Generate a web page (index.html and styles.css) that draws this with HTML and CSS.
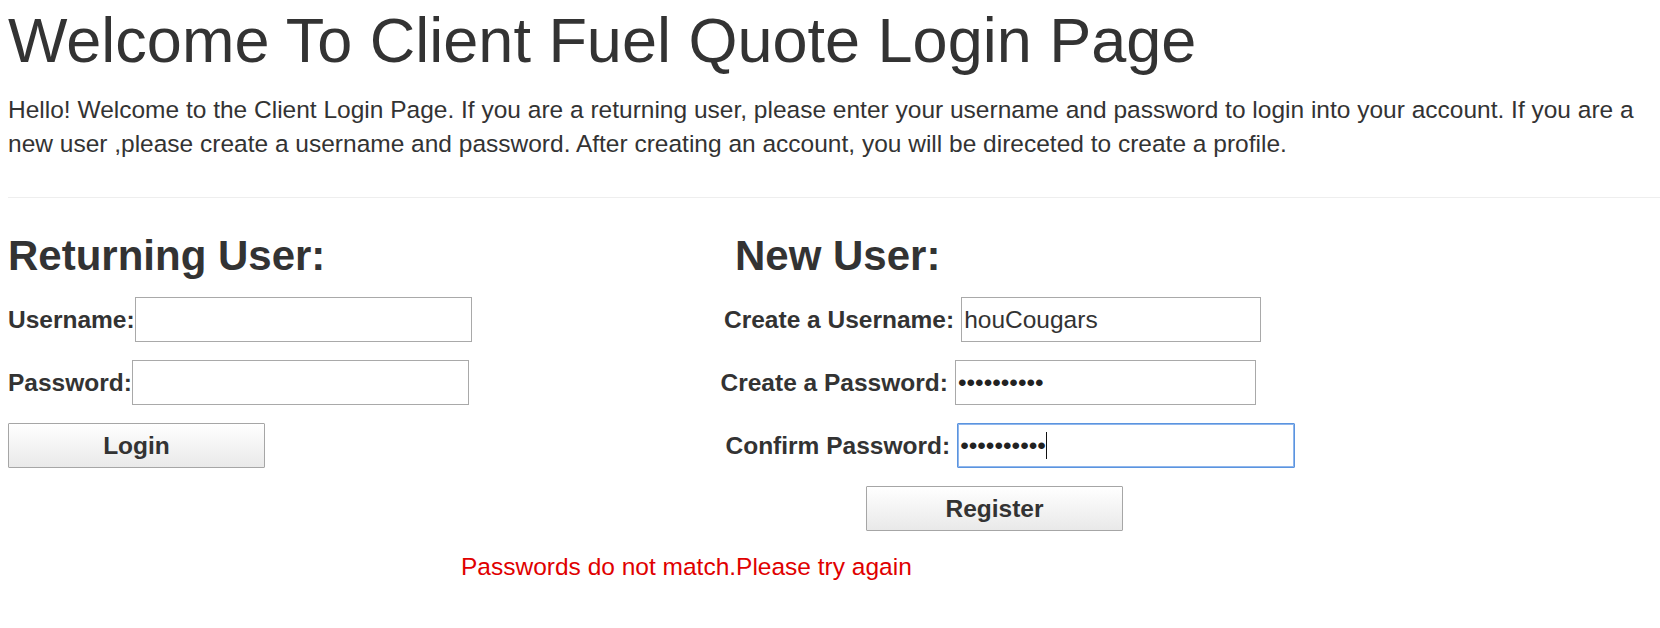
FILE: index.html
```html
<!DOCTYPE html>
<html lang="en">
<head>
<meta charset="utf-8">
<title>Client Fuel Quote Login</title>
<link rel="stylesheet" href="styles.css">
</head>
<body>
<div class="page">
  <h1 class="title">Welcome To Client Fuel Quote Login Page</h1>
  <p class="intro">Hello! Welcome to the Client Login Page. If you are a returning user, please enter your username and password to login into your account. If you are a new user ,please create a username and password. After creating an account, you will be direceted to create a profile.</p>
  <hr class="rule">
  <div class="forms">
    <section class="col col-returning">
      <h3 class="heading">Returning User:</h3>
      <div class="row"><label class="lbl">Username:</label><input class="field w-337" type="text"></div>
      <div class="row"><label class="lbl">Password:</label><input class="field w-337" type="password"></div>
      <button class="btn" type="button">Login</button>
    </section>
    <section class="col col-new">
      <h3 class="heading heading-new">New User:</h3>
      <div class="row row-gap r1"><label class="lbl">Create a Username:</label><input class="field w-300" type="text" value="houCougars"></div>
      <div class="row row-gap r2"><label class="lbl">Create a Password:</label><input class="field w-301" type="password" value="0123456789"></div>
      <div class="row row-gap r3"><label class="lbl">Confirm Password:</label><span class="field-wrap"><input class="field w-338 focused" type="password" value="0123456789"><span class="caret"></span></span></div>
      <button class="btn btn-register" type="button">Register</button>
    </section>
  </div>
  <p class="error">Passwords do not match.Please try again</p>
</div>
</body>
</html>
```
FILE: styles.css
```css
html, body {
  margin: 0;
  padding: 0;
  background: #fff;
}
body {
  font-family: "Liberation Sans", Arial, Helvetica, sans-serif;
  color: #333;
  font-size: 24.5px;
}
.page {
  padding-left: 8px;
  width: 1652px;
}
.title {
  margin: 6px 0 0;
  font-size: 63px;
  line-height: 69px;
  font-weight: 400;
  color: #333;
}
.intro {
  margin: 17.5px 0 0;
  font-size: 24.5px;
  line-height: 34.3px;
}
.rule {
  margin: 36px 0 34.5px;
  border: 0;
  border-top: 1px solid #eee;
  height: 0;
}
.forms {
  display: grid;
  grid-template-columns: 712px 1fr;
  align-items: start;
}
.col {
  display: flex;
  flex-direction: column;
  align-items: flex-start;
  gap: 18px;
}
.heading {
  margin: 0;
  font-size: 42px;
  line-height: 46.5px;
  font-weight: 700;
  color: #333;
}
.heading-new {
  margin-left: 15px;
}
.row {
  display: flex;
  align-items: center;
  height: 45px;
}
.row-gap {
  gap: 7px;
}
.r1 { margin-left: 4px; }
.r2 { margin-left: 0.5px; }
.r3 { margin-left: 5.5px; }
.lbl {
  font-weight: 700;
  font-size: 24.5px;
  white-space: nowrap;
}
.field {
  box-sizing: border-box;
  height: 45px;
  border: 1px solid #a9a9a9;
  padding: 0 2px;
  margin: 0;
  font-family: "Liberation Sans", Arial, sans-serif;
  font-size: 24.5px;
  color: #333;
  background: #fff;
  outline: none;
}
.field[type="password"] {
  color: #222;
}
.w-337 { width: 337px; }
.w-300 { width: 300px; }
.w-301 { width: 301px; }
.w-338 { width: 338px; }
.field-wrap {
  position: relative;
  display: inline-flex;
}
.focused {
  border-color: #5b94df;
  box-shadow: inset 0 0 0 1px #8fb6ec;
  border-radius: 1px;
}
.caret {
  position: absolute;
  left: 89px;
  top: 9px;
  width: 1px;
  height: 27px;
  background: #111;
}
.btn {
  box-sizing: border-box;
  width: 257px;
  height: 45px;
  margin: 0;
  border: 1px solid #a6a6a6;
  border-radius: 1px;
  background: linear-gradient(#ffffff, #e9e9e9);
  font-family: "Liberation Sans", Arial, sans-serif;
  font-size: 24.5px;
  font-weight: 700;
  color: #333;
  padding: 0;
}
.btn-register {
  margin-left: 146px;
}
.error {
  margin: 17.5px 0 0;
  padding-left: 453px;
  line-height: 35px;
  color: #e00000;
}
```
